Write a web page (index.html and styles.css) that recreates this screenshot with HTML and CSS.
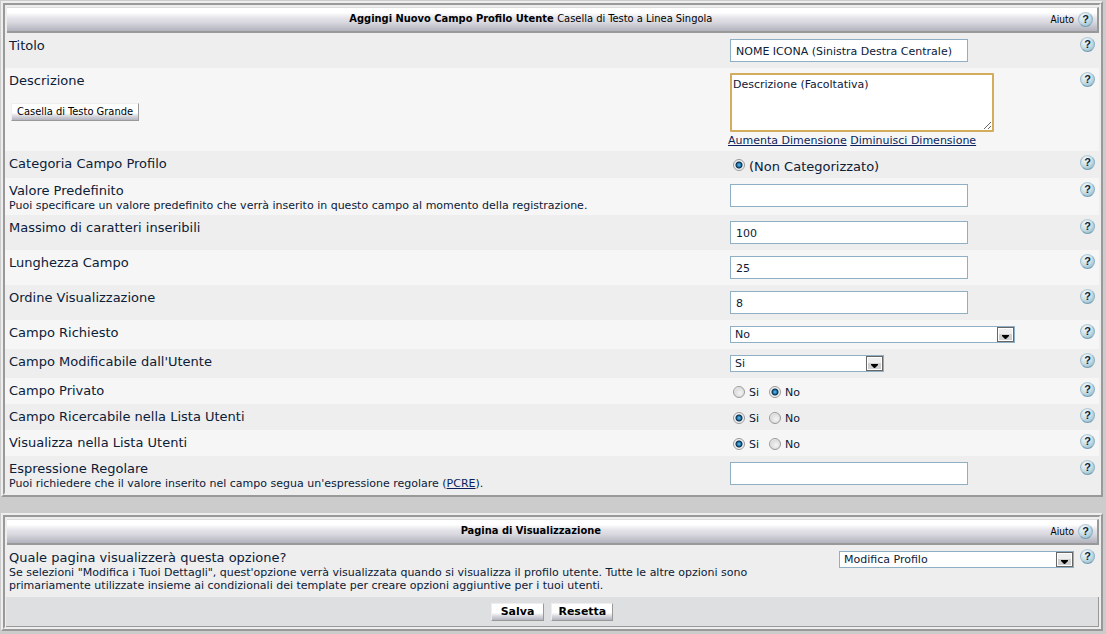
FILE: index.html
```
<!DOCTYPE html>
<html lang="it">
<head>
<meta charset="utf-8">
<title>Aggingi Nuovo Campo Profilo Utente</title>
<link rel="stylesheet" href="styles.css">
</head>
<body>
<form class="page">
  <section class="panel">
    <div class="panel-body">
      <header class="head">
        <h2 class="head-title">Aggingi Nuovo Campo Profilo Utente <span class="head-note">Casella di Testo a Linea Singola</span></h2>
        <div class="head-help">Aiuto <a class="help" href="#">?</a></div>
      </header>
      <div class="row">
        <div class="label"><label for="titolo">Titolo</label></div>
        <div class="control"><input class="text" id="titolo" type="text" value="NOME ICONA (Sinistra Destra Centrale)"></div>
        <a class="help" href="#">?</a>
      </div>
      <div class="row">
        <div class="label"><label for="descrizione">Descrizione</label><button class="button large-box" type="button">Casella di Testo Grande</button></div>
        <div class="control area-control">
          <textarea class="area" id="descrizione">Descrizione (Facoltativa)</textarea>
          <div class="links"><a href="#">Aumenta Dimensione</a> <a href="#">Diminuisci Dimensione</a></div>
        </div>
        <a class="help" href="#">?</a>
      </div>
      <div class="row">
        <div class="label">Categoria Campo Profilo</div>
        <div class="control radios category"><label class="option"><input class="radio" type="radio" name="categoria" checked>(Non Categorizzato)</label></div>
        <a class="help" href="#">?</a>
      </div>
      <div class="row">
        <div class="label"><label for="valore">Valore Predefinito</label><p class="note">Puoi specificare un valore predefinito che verrà inserito in questo campo al momento della registrazione.</p></div>
        <div class="control"><input class="text" id="valore" type="text"></div>
        <a class="help" href="#">?</a>
      </div>
      <div class="row">
        <div class="label"><label for="massimo">Massimo di caratteri inseribili</label></div>
        <div class="control"><input class="text" id="massimo" type="text" value="100"></div>
        <a class="help" href="#">?</a>
      </div>
      <div class="row">
        <div class="label"><label for="lunghezza">Lunghezza Campo</label></div>
        <div class="control"><input class="text" id="lunghezza" type="text" value="25"></div>
        <a class="help" href="#">?</a>
      </div>
      <div class="row">
        <div class="label"><label for="ordine">Ordine Visualizzazione</label></div>
        <div class="control"><input class="text" id="ordine" type="text" value="8"></div>
        <a class="help" href="#">?</a>
      </div>
      <div class="row">
        <div class="label"><label for="richiesto">Campo Richiesto</label></div>
        <div class="control"><select class="select wide" id="richiesto"><option>No</option><option>Si</option></select></div>
        <a class="help" href="#">?</a>
      </div>
      <div class="row">
        <div class="label"><label for="modificabile">Campo Modificabile dall'Utente</label></div>
        <div class="control"><select class="select narrow" id="modificabile"><option>Si</option><option>No</option></select></div>
        <a class="help" href="#">?</a>
      </div>
      <div class="row">
        <div class="label">Campo Privato</div>
        <div class="control radios"><label class="option"><input class="radio" type="radio" name="privato">Si</label><label class="option"><input class="radio" type="radio" name="privato" checked>No</label></div>
        <a class="help" href="#">?</a>
      </div>
      <div class="row">
        <div class="label">Campo Ricercabile nella Lista Utenti</div>
        <div class="control radios"><label class="option"><input class="radio" type="radio" name="ricercabile" checked>Si</label><label class="option"><input class="radio" type="radio" name="ricercabile">No</label></div>
        <a class="help" href="#">?</a>
      </div>
      <div class="row">
        <div class="label">Visualizza nella Lista Utenti</div>
        <div class="control radios"><label class="option"><input class="radio" type="radio" name="visualizza" checked>Si</label><label class="option"><input class="radio" type="radio" name="visualizza">No</label></div>
        <a class="help" href="#">?</a>
      </div>
      <div class="row">
        <div class="label"><label for="regex">Espressione Regolare</label><p class="note">Puoi richiedere che il valore inserito nel campo segua un'espressione regolare (<a href="#">PCRE</a>).</p></div>
        <div class="control"><input class="text" id="regex" type="text"></div>
        <a class="help" href="#">?</a>
      </div>
    </div>
  </section>

  <section class="panel">
    <div class="panel-body">
      <header class="head">
        <h2 class="head-title">Pagina di Visualizzazione</h2>
        <div class="head-help">Aiuto <a class="help" href="#">?</a></div>
      </header>
      <div class="row page-row">
        <div class="label"><label for="pagina">Quale pagina visualizzerà questa opzione?</label><p class="note">Se selezioni "Modifica i Tuoi Dettagli", quest'opzione verrà visualizzata quando si visualizza il profilo utente. Tutte le altre opzioni sono primariamente utilizzate insieme ai condizionali dei template per creare opzioni aggiuntive per i tuoi utenti.</p></div>
        <div class="control"><select class="select medium" id="pagina"><option>Modifica Profilo</option></select></div>
        <a class="help" href="#">?</a>
      </div>
      <footer class="foot">
        <button class="button strong save" type="submit">Salva</button>
        <button class="button strong" type="reset">Resetta</button>
      </footer>
    </div>
  </section>
</form>
</body>
</html>
```
FILE: styles.css
```
* { box-sizing: border-box; }

body {
  margin: 0;
  background: #ccc;
  color: #0b2038;
  font: 13px/15px Verdana, "DejaVu Sans", sans-serif;
}

a { color: #0a1f5c; }

.page {
  display: flex;
  flex-direction: column;
  gap: 16px;
  padding: 1px 3px 4px 1px;
}

.panel {
  border: 2px solid;
  border-color: #eee #999 #999 #eee;
}

.panel-body {
  border: 2px solid;
  border-color: #999 #eee #eee #999;
  background: #eee;
}

.head {
  display: grid;
  grid-template-columns: 1fr auto;
  align-items: center;
  height: 26px;
  margin: 2px 0 0 2px;
  border-top: 1px solid #ddd;
  border-right: 2px solid #999;
  border-bottom: 2px solid #999;
  background: linear-gradient(#fff 0%, #fff 20%, #e2e2e8 45%, #dadae0 60%, #b2b2be 100%);
  color: #000;
  font: 11px/14px Tahoma, "DejaVu Sans Condensed", "DejaVu Sans", sans-serif;
}

.head-title {
  margin: 0;
  padding-left: 4px;
  padding-bottom: 2px;
  font-size: 11px;
  text-align: center;
}

.head-note { font-weight: normal; }

.head-help {
  display: flex;
  align-items: center;
  gap: 4px;
  padding-right: 4px;
  font-size: 10px;
}

.help {
  display: block;
  flex: none;
  width: 15px;
  height: 15px;
  border: 1px solid;
  border-color: #b4cdd8 #8fb2c2 #6f9db2 #9fbfcd;
  border-radius: 50%;
  background: radial-gradient(circle at 35% 25%, #f4f9fb 0%, #c9dee8 50%, #86afc2 100%);
  color: #0f2436;
  font: bold 11px/13px "Liberation Sans", Arial, sans-serif;
  text-align: center;
  text-decoration: none;
}

.row {
  display: grid;
  grid-template-columns: 1fr 352px 15px;
  padding: 4px;
}

.row:nth-child(odd) { background: #f6f6f6; }

.label { padding-top: 1px; }

.label > label { display: block; }

.note {
  margin: 1px 0 -1px;
  font-size: 11px;
  line-height: 13px;
}

.control {
  display: flow-root;
  padding: 2px 0 2px 2px;
}

.area-control { padding: 1px 0 0 2px; }

.text,
.area,
.select {
  display: block;
  border: 1px solid #8fb0c4;
  border-radius: 0;
  background-color: #fff;
  color: #0b2038;
  font: 11px/13px Verdana, "DejaVu Sans", sans-serif;
}

.text {
  width: 238px;
  height: 23px;
  padding: 2px 5px 0;
}

.area {
  width: 264px;
  height: 59px;
  padding: 3px 1px 1px;
  border: 2px solid #d3ad5c;
  border-radius: 1px;
  outline: none;
}

.links {
  margin: 2px 0 0 -2px;
  font-size: 11px;
  line-height: 13px;
  white-space: nowrap;
}

.select {
  height: 17px;
  padding: 0 20px 0 4px;
  appearance: none;
  background-image: url("data:image/svg+xml,%3Csvg xmlns='http://www.w3.org/2000/svg' width='17' height='15'%3E%3Cpath fill='%23666' d='M0 0h17v15H0z'/%3E%3Cpath fill='%23fff' d='M1 1h15v13H1z'/%3E%3Cpath fill='%23eee' d='M2 2h13v5H2z'/%3E%3Cpath fill='%23d0d0d0' d='M2 7h13v6H2z'/%3E%3Cpath d='M5 8h7v1l-3 3h-1l-3-3z'/%3E%3C/svg%3E");
  background-repeat: no-repeat;
  background-position: right center;
}

.wide { width: 285px; }
.narrow { width: 154px; }
.medium { width: 235px; }

.radios {
  display: flex;
  gap: 10px;
  padding: 4px 0 0 5px;
  font-size: 11px;
  line-height: 14px;
}

.category {
  font-size: 13px;
  line-height: 15px;
}

.option {
  display: flex;
  gap: 4px;
}

.radio {
  width: 12px;
  height: 12px;
  margin: 0;
  appearance: none;
  border: 1px solid #999;
  border-radius: 50%;
  background: radial-gradient(circle at 60% 60%, #f4f4f4 0%, #dcdcdc 60%, #fff 80%);
}

.radio:checked {
  background: radial-gradient(circle, #6cc4ee 0, #1a6ea3 2px, #0c2c4c 3px, #f2f2f2 4px);
}

.button {
  height: 18px;
  padding: 0 7px;
  border: 1px solid;
  border-color: #eee #999 #999 #eee;
  border-radius: 0;
  background: linear-gradient(#fff 0%, #fff 55%, #d8d8de 75%, #b4b4c0 100%);
  color: #000;
  font: 11px/14px Tahoma, "DejaVu Sans Condensed", "DejaVu Sans", sans-serif;
}

.large-box {
  display: block;
  margin: 15px 0 0 2px;
  padding: 0 5px;
}

.strong {
  padding: 0 6px;
  font: bold 11px/14px Verdana, "DejaVu Sans", sans-serif;
}

.save { padding: 0 9px; }

.page-row {
  grid-template-columns: minmax(0, 1fr) auto 15px;
  column-gap: 6px;
  padding-bottom: 6px;
}

.page-row .label { max-width: 780px; }

.foot {
  display: flex;
  justify-content: center;
  gap: 7px;
  margin-left: 1px;
  padding: 6px 0 5px;
  border-right: 1px solid #999;
  border-bottom: 1px solid #999;
  background: #dedfe1;
}
```
